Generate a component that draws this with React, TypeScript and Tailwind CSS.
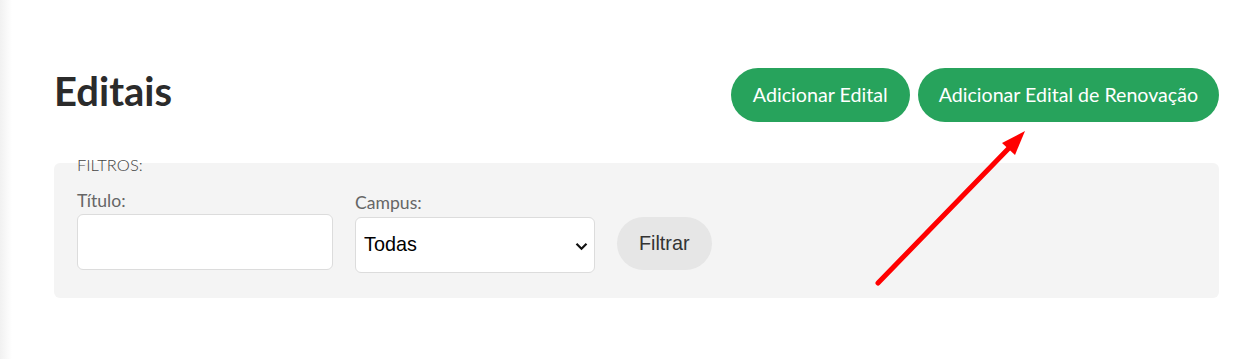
import React from 'react';

const Editais: React.FC = () => {
    return (
        <div className="relative min-h-[359px] flex bg-white font-['Lato',sans-serif]">
            {/* sidebar edge shadow */}
            <div className="w-[12px] shrink-0 bg-gradient-to-r from-[#f1f1f1] to-white" />

            <main className="flex-1 pl-[42px] pr-[36px] pt-[68px]">
                <div className="flex items-center justify-between">
                    <h1 className="pb-[8px] text-[40px] leading-[46px] font-bold text-[#2b2b2b]">Editais</h1>
                    <div className="flex gap-2">
                        <button className="h-[54px] rounded-full bg-[#27a35c] px-[22px] text-[19.7px] text-white">
                            Adicionar Edital
                        </button>
                        <button className="h-[54px] rounded-full bg-[#27a35c] px-[21px] text-[19.6px] text-white">
                            Adicionar Edital de Renovação
                        </button>
                    </div>
                </div>

                <fieldset className="mt-[29px] rounded-md bg-[#f4f4f4] px-[23px] pt-[14px] pb-[25px]">
                    <legend className="pt-[4px] text-[16.5px] leading-5 font-light text-[#444]">FILTROS:</legend>
                    <div className="flex items-start gap-[22px]">
                        <div className="flex flex-col gap-[1px]">
                            <label className="text-[17.6px] leading-6 text-[#666]">Título:</label>
                            <input
                                type="text"
                                className="h-[56px] w-[256px] rounded-md border border-[#dcdcdc] bg-white px-2"
                            />
                        </div>
                        <div className="mt-[2px] flex flex-col gap-[2px]">
                            <label className="text-[17.6px] leading-6 text-[#666]">Campus:</label>
                            <div className="relative">
                                <select className="h-[56px] w-[240px] appearance-none rounded-md border border-[#dcdcdc] bg-white pl-2 font-['Liberation_Sans',Arial,sans-serif] text-[19.8px] text-black">
                                    <option>Todas</option>
                                </select>
                                <svg
                                    className="pointer-events-none absolute right-[7px] top-[25px]"
                                    width="13"
                                    height="9"
                                    viewBox="0 0 13 9"
                                >
                                    <path d="M1.5 1.8 L6.5 6.8 L11.5 1.8" fill="none" stroke="#111" strokeWidth="2.2" />
                                </svg>
                            </div>
                        </div>
                        <button className="mt-[28px] h-[53px] rounded-full bg-[#e6e6e6] px-[22px] font-['Liberation_Sans',Arial,sans-serif] text-[19.8px] text-[#333]">
                            Filtrar
                        </button>
                    </div>
                </fieldset>
            </main>

            {/* annotation arrow */}
            <svg className="pointer-events-none absolute left-0 top-0" width="1255" height="359">
                <line x1="878" y1="283" x2="1010" y2="147" stroke="#ff0000" strokeWidth="5" strokeLinecap="round" />
                <polygon points="1025,131 1002,143 1015,155" fill="#ff0000" />
            </svg>
        </div>
    );
};

export default Editais;
